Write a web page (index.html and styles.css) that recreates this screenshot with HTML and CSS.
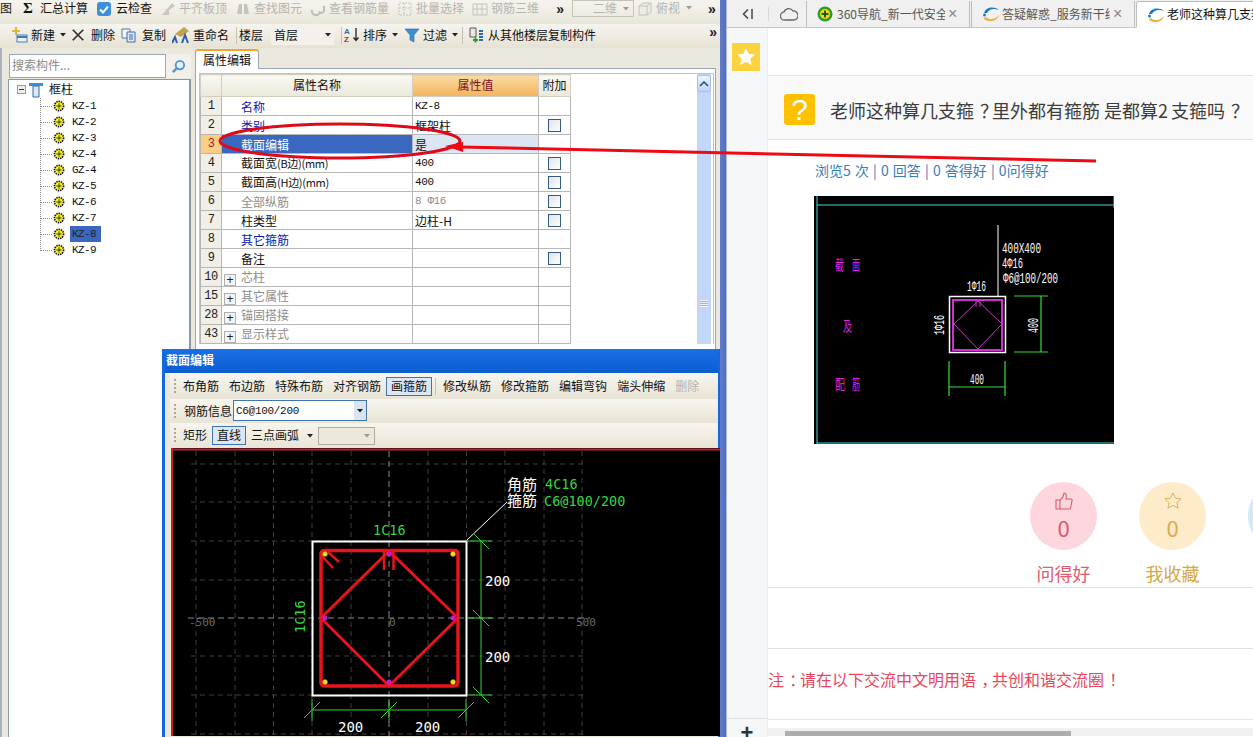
FILE: index.html
```html
<!DOCTYPE html>
<html lang="zh">
<head>
<meta charset="utf-8">
<title>截面编辑</title>
<link rel="stylesheet" href="styles.css">
</head>
<body>
<svg class="defs" width="0" height="0">
  <symbol id="gear" viewBox="0 0 12 12">
    <circle cx="6" cy="6" r="4.600" fill="#f6f01e" stroke="#111" stroke-width="1.600" stroke-dasharray="1.400 .9"/>
    <path d="M3.500 6h5M6 3.500v5" stroke="#222" stroke-width=".9"/>
  </symbol>
  <symbol id="caret" viewBox="0 0 6 4"><path d="M0 0h6L3 3.500z" fill="#222"/></symbol>
  <symbol id="logo" viewBox="0 0 18 16">
    <path d="M2 7C4 1 12 0 17 4C12 2 7 3 5 7z" fill="#2179c6"/>
    <path d="M3 11c5 3 10 3 14-2c-1 6-10 8-15 4z" fill="#efb13a"/>
    <circle cx="2.500" cy="9" r="1.500" fill="#2179c6"/>
  </symbol>
</svg>

<div class="screen">
  <section class="app">
    <div class="bar bar-top">
      <span class="label first">图</span>
      <span class="sigma">Σ</span>
      <span class="label">汇总计算</span>
      <span class="tool t-cloud"><svg class="ic" viewBox="0 0 16 16"><rect x="1" y="1" width="14" height="14" rx="3" fill="#3d8fd8"/><path d="M4 8.500l3 3 5-6" stroke="#fff" stroke-width="2" fill="none"/></svg>云检查</span>
      <span class="tool off"><svg class="ic" viewBox="0 0 16 16"><path d="M2 14L12 2l3 3-6 4v5z" fill="#c8c8c2"/></svg>平齐板顶</span>
      <span class="tool off"><svg class="ic" viewBox="0 0 16 16"><path d="M2 13l2-10h3v10zM9 13V3h3l2 10z" fill="#c4c4be"/></svg>查找图元</span>
      <span class="tool off"><svg class="ic" viewBox="0 0 16 16"><path d="M2 9a4 4 0 0 0 8 2M14 5v5a3 3 0 0 1-5 1" stroke="#bdbdb6" stroke-width="2" fill="none"/></svg>查看钢筋量</span>
      <span class="tool off"><svg class="ic" viewBox="0 0 16 16"><path d="M2 2h12v12H2zM2 7h12M7 2v12" stroke="#c4c4be" fill="none" stroke-dasharray="2 1"/></svg>批量选择</span>
      <span class="tool off"><svg class="ic" viewBox="0 0 16 16"><path d="M1 3h14v11H1zM5 3v11M10 3v11M1 8h14" stroke="#c4c4be" fill="none"/></svg>钢筋三维</span>
      <span class="more more-a">»</span>
      <span class="combo-2d">二维<svg class="caret off-caret"><use href="#caret"/></svg></span>
      <svg class="ic view-ic" viewBox="0 0 16 16"><path d="M2 5l4-3h8v9l-4 3H2zM2 5h8v9M10 5l4-3" stroke="#c0c0ba" fill="#eeece4"/></svg>
      <span class="view-label">俯视<svg class="caret off-caret"><use href="#caret"/></svg></span>
      <span class="more more-b">»</span>
    </div>

    <div class="bar bar-second">
      <span class="tool t-new"><svg class="ic" viewBox="0 0 16 16"><path d="M3 0v3H0v2h3v3h2V5h3V3H5V0z" fill="#e4b53a"/><rect x="5" y="8" width="10" height="7" fill="#e8f1fa" stroke="#3e7fb6"/><path d="M5 10h10" stroke="#3e7fb6" stroke-width="2"/></svg>新建<svg class="caret"><use href="#caret"/></svg></span>
      <span class="tool t-del"><svg class="ic ic-sm" viewBox="0 0 16 16"><path d="M2 2l12 12M14 2L2 14" stroke="#333" stroke-width="2"/></svg>删除</span>
      <span class="tool t-copy"><svg class="ic" viewBox="0 0 16 16"><path d="M1 2h8v9H1z" fill="#f4f6fa" stroke="#5878a0"/><path d="M6 5h8v10H6z" fill="#dfe8f4" stroke="#3e6ea8"/><path d="M8 8h4M8 10h4M8 12h4" stroke="#3e6ea8"/></svg>复制</span>
      <span class="tool t-ren"><svg class="ic ic-lg" viewBox="0 0 18 18"><path d="M3 8l9-7 5 4-8 6z" fill="#c2a24e"/><path d="M0 17l3-6 2 6M10 17l3-8 3 8" stroke="#2b5fa8" stroke-width="2" fill="none"/></svg>重命名</span>
      <span class="sep"></span>
      <span class="label floor">楼层</span>
      <span class="floor-combo">首层<svg class="caret"><use href="#caret"/></svg></span>
      <span class="sep"></span>
      <span class="tool t-sort"><svg class="ic" viewBox="0 0 16 16"><text x="0" y="7" class="az az-a">A</text><text x="0" y="15" class="az az-z">Z</text><path d="M12 1v12M9.500 10.500l2.500 3 2.500-3" stroke="#222" fill="none" stroke-width="1.300"/></svg>排序<svg class="caret"><use href="#caret"/></svg></span>
      <span class="tool t-filter"><svg class="ic" viewBox="0 0 16 16"><path d="M1 2h14l-5 6v7l-4-2V8z" fill="#3f8ed6" stroke="#2c6aa8" stroke-width=".6"/></svg>过滤<svg class="caret"><use href="#caret"/></svg></span>
      <span class="sep sep-c"></span>
      <span class="tool t-floor"><svg class="ic" viewBox="0 0 16 16"><path d="M2 1h6v9H2z" fill="#e8e8e8" stroke="#555"/><path d="M5 13h5M7.500 10.500v5" stroke="#2e9c3a" stroke-width="2"/><path d="M11 4h4M11 7h4M11 10h4M11 13h4" stroke="#2c6aa8" stroke-width="2"/></svg>从其他楼层复制构件</span>
      <span class="more more-c">»</span>
    </div>

    <div class="workspace">
      <aside class="tree-side">
        <div class="search">
          <span class="search-input">搜索构件...</span>
          <span class="search-btn"><svg viewBox="0 0 16 16" width="15" height="15"><circle cx="9.500" cy="6.500" r="4.500" fill="#e8f2fb" stroke="#4c95d6" stroke-width="2"/><path d="M6 10l-4 4" stroke="#4c95d6" stroke-width="2.500"/></svg></span>
        </div>
        <div class="tree">
          <div class="tree-root">
            <span class="minus"></span>
            <svg class="funnel" viewBox="0 0 14 16"><path d="M0 1h14v3H0z" fill="#3d8fd8"/><path d="M4 4h6v11H4z" fill="#dbe9f6" stroke="#2c6aa8"/></svg>
            <span>框柱</span>
          </div>
          <ul class="tree-list">
            <li><svg class="gear"><use href="#gear"/></svg><span>KZ-1</span></li>
            <li><svg class="gear"><use href="#gear"/></svg><span>KZ-2</span></li>
            <li><svg class="gear"><use href="#gear"/></svg><span>KZ-3</span></li>
            <li><svg class="gear"><use href="#gear"/></svg><span>KZ-4</span></li>
            <li><svg class="gear"><use href="#gear"/></svg><span>GZ-4</span></li>
            <li><svg class="gear"><use href="#gear"/></svg><span>KZ-5</span></li>
            <li><svg class="gear"><use href="#gear"/></svg><span>KZ-6</span></li>
            <li><svg class="gear"><use href="#gear"/></svg><span>KZ-7</span></li>
            <li><svg class="gear"><use href="#gear"/></svg><span class="picked">KZ-8</span></li>
            <li><svg class="gear"><use href="#gear"/></svg><span>KZ-9</span></li>
          </ul>
        </div>
      </aside>

      <main class="props">
        <div class="tab">属性编辑</div>
        <div class="props-panel">
          <div class="table-frame">
            <table class="grid">
              <colgroup><col class="c-n"><col class="c-name"><col class="c-val"><col class="c-add"></colgroup>
              <thead><tr><th></th><th>属性名称</th><th class="th-val">属性值</th><th>附加</th></tr></thead>
              <tbody>
                <tr><td class="n">1</td><td class="name link">名称</td><td class="mono">KZ-8</td><td></td></tr>
                <tr><td class="n">2</td><td class="name link">类别</td><td>框架柱</td><td class="chk"><i></i></td></tr>
                <tr class="sel"><td class="n">3</td><td class="name">截面编辑</td><td>是</td><td></td></tr>
                <tr><td class="n">4</td><td class="name">截面宽<span class="unit">(B边)(mm)</span></td><td class="mono">400</td><td class="chk"><i></i></td></tr>
                <tr><td class="n">5</td><td class="name">截面高<span class="unit">(H边)(mm)</span></td><td class="mono">400</td><td class="chk"><i></i></td></tr>
                <tr><td class="n">6</td><td class="name dim">全部纵筋</td><td class="mono dim">8 Φ16</td><td class="chk"><i></i></td></tr>
                <tr><td class="n">7</td><td class="name">柱类型</td><td>边柱-H</td><td class="chk"><i></i></td></tr>
                <tr><td class="n">8</td><td class="name link">其它箍筋</td><td></td><td></td></tr>
                <tr><td class="n">9</td><td class="name">备注</td><td></td><td class="chk"><i></i></td></tr>
                <tr><td class="n">10</td><td class="name dim"><b class="plus">+</b>芯柱</td><td></td><td></td></tr>
                <tr><td class="n">15</td><td class="name dim"><b class="plus">+</b>其它属性</td><td></td><td></td></tr>
                <tr><td class="n">28</td><td class="name dim"><b class="plus">+</b>锚固搭接</td><td></td><td></td></tr>
                <tr><td class="n">43</td><td class="name dim"><b class="plus">+</b>显示样式</td><td></td><td></td></tr>
              </tbody>
            </table>
            <div class="vscroll">
              <span class="vs-up"><svg viewBox="0 0 10 6" width="10" height="6"><path d="M1 5l4-4 4 4" stroke="#27517f" stroke-width="1.600" fill="none"/></svg></span>
              <span class="vs-grip"></span>
            </div>
          </div>
        </div>
      </main>
    </div>
  </section>

  <div class="splitter"></div>

  <section class="browser">
    <div class="tabbar">
      <svg class="nav-back" viewBox="0 0 11 10"><path d="M6 .5L1.500 5 6 9.500M10 0v10" fill="none" stroke="#444" stroke-width="1.500"/></svg>
      <span class="nav-sep"></span>
      <svg class="cloud" viewBox="0 0 18 14"><path d="M5 13a4 4 0 0 1-1-8 5 5 0 0 1 9-1 4.500 4.500 0 0 1 1 9z" fill="none" stroke="#666" stroke-width="1.300"/></svg>
      <div class="btab t1"><svg class="fav" viewBox="0 0 16 16"><circle cx="8" cy="8" r="7.500" fill="#2d9a32"/><circle cx="8" cy="8" r="5" fill="#f5d90a"/><path d="M4.500 8h7M8 4.500v7" stroke="#165e1a" stroke-width="2"/></svg><span class="btab-text">360导航_新一代安全</span><span class="x">×</span></div>
      <div class="btab t2"><svg class="fav2"><use href="#logo"/></svg><span class="btab-text">答疑解惑_服务新干线</span><span class="x">×</span></div>
      <div class="btab active"><svg class="fav2"><use href="#logo"/></svg><span class="btab-text">老师这种算几支箍？里外</span></div>
    </div>
    <div class="browser-body">
      <nav class="rail">
        <span class="star-box"><svg viewBox="0 0 20 20" width="20" height="20"><path d="M10 1l2.800 6 6.200.6-4.700 4.200 1.400 6.200L10 14.800 4.300 18l1.400-6.200L1 7.600 7.200 7z" fill="#fff"/></svg></span>
        <span class="rail-add">+</span>
      </nav>
      <article class="page">
        <div class="page-top"></div>
        <header class="question">
          <span class="q-mark">?</span>
          <h1>老师这种算几支箍<span class="punct">？</span>里外都有箍筋 是都算<span class="num">2</span>支箍吗<span class="punct">？</span></h1>
        </header>
        <p class="stats">浏览5 次 | 0 回答 | 0 答得好 | 0问得好</p>
        <svg class="photo" viewBox="814 197 300 248" width="300" height="248">
          <rect x="814" y="197" width="300" height="248" fill="#000"/>
          <path d="M817 197v248M817 206h297M817 444h297M1114 197v12" stroke="#49d6d6" fill="none"/>
          <path d="M998 226v71" stroke="#fff"/>
          <rect x="949.500" y="297.500" width="56" height="56" fill="none" stroke="#fff" stroke-width="1.500"/>
          <rect x="953" y="301" width="49" height="50" fill="none" stroke="#d22fd2" stroke-width="2"/>
          <path d="M978 302l24 23-24 25-24-25z" fill="none" stroke="#d22fd2"/>
          <path d="M976 302v6M980 302v6" stroke="#d22fd2"/>
          <path d="M1014 297h34M1014 353h34M1041 297v56M949 362v35M1005 362v35M949 388h56" stroke="#35e035" stroke-width="1.200"/>
          <g class="cad-w">
            <text x="1002" y="254" textLength="39" lengthAdjust="spacingAndGlyphs">400X400</text>
            <text x="1002" y="269" textLength="21" lengthAdjust="spacingAndGlyphs">4Φ16</text>
            <text x="1003" y="284" textLength="55" lengthAdjust="spacingAndGlyphs">Φ6@100/200</text>
            <text x="967" y="292" textLength="19" lengthAdjust="spacingAndGlyphs">1Φ16</text>
            <text x="970" y="385" textLength="14" lengthAdjust="spacingAndGlyphs">400</text>
            <text transform="translate(944 336) rotate(-90)" textLength="20" lengthAdjust="spacingAndGlyphs">1Φ16</text>
            <text transform="translate(1038 334) rotate(-90)" textLength="15" lengthAdjust="spacingAndGlyphs">400</text>
          </g>
          <g class="cad-m">
            <text x="835" y="271" textLength="9" lengthAdjust="spacingAndGlyphs">截</text><text x="852" y="271" textLength="8" lengthAdjust="spacingAndGlyphs">面</text>
            <text x="843" y="332" textLength="9" lengthAdjust="spacingAndGlyphs">及</text>
            <text x="835" y="390" textLength="10" lengthAdjust="spacingAndGlyphs">配</text><text x="852" y="390" textLength="8" lengthAdjust="spacingAndGlyphs">筋</text>
          </g>
        </svg>
        <div class="actions">
          <div class="action good">
            <span class="disc"><svg viewBox="0 0 18 18" width="18" height="18"><path d="M1 8h4v9H1zM5 8l3-3 1-4c2 0 3 2 2 6h5c1 0 1.500 1 1 2l-1.500 7c0 .6-.6 1-1.300 1H5" fill="none" stroke="currentColor" stroke-width="1.100"/></svg><b>0</b></span>
            <span class="action-label">问得好</span>
          </div>
          <div class="action fav-act">
            <span class="disc"><svg viewBox="0 0 20 20" width="18" height="18"><path d="M10 1l2.800 6 6.200.6-4.700 4.200 1.400 6.200L10 14.800 4.300 18l1.400-6.200L1 7.600 7.200 7z" fill="none" stroke="currentColor"/></svg><b>0</b></span>
            <span class="action-label">我收藏</span>
          </div>
          <div class="action sky"><span class="disc"></span></div>
        </div>
        <div class="gap-band"></div>
        <p class="note">注<span class="punct">：</span>请在以下交流中文明用语<span class="punct">，</span>共创和谐交流圈<span class="punct">！</span></p>
        <div class="hscroll"><span class="hs-thumb"></span></div>
      </article>
    </div>
  </section>

  <div class="dialog">
    <div class="dlg-title">截面编辑</div>
    <div class="dlg-inner">
      <div class="dlg-row r1">
        <span class="grip"></span>
        <span>布角筋</span><span>布边筋</span><span>特殊布筋</span><span>对齐钢筋</span>
        <span class="pressed">画箍筋</span><span class="sep"></span>
        <span>修改纵筋</span><span>修改箍筋</span><span>编辑弯钩</span><span>端头伸缩</span><span class="off">删除</span>
      </div>
      <div class="dlg-row r2">
        <span class="grip"></span>
        <span>钢筋信息</span>
        <span class="rebar-combo"><span>C6@100/200</span><span class="rc-btn"><svg class="caret"><use href="#caret"/></svg></span></span>
      </div>
      <div class="dlg-row r3">
        <span class="grip"></span>
        <span>矩形</span><span class="pressed">直线</span><span>三点画弧</span>
        <svg class="caret arc-caret"><use href="#caret"/></svg>
        <span class="arc-combo"><svg class="caret off-caret"><use href="#caret"/></svg></span>
      </div>
      <svg class="cad" viewBox="171 449 549 288" width="549" height="288">
        <rect x="171" y="449" width="549" height="288" fill="#000"/>
        <path d="M171 450.500H720M172 449v288" stroke="#c0202c" stroke-width="2"/>
        <path class="grid-minor" d="M191 465H587M191 503H587M191 542H587M191 581H587M191 657H587M191 696H587M191 735H587M196 452V737M235 452V737M273.500 452V737M312 452V737M351 452V737M428 452V737M466.500 452V737M505 452V737M544 452V737M582 452V737"/>
        <path class="grid-major" d="M188 619H590M389 452V737"/>
        <text class="cad-grey" x="189" y="627">-500</text>
        <text class="cad-grey" x="389" y="627">0</text>
        <text class="cad-grey" x="576" y="627">500</text>
        <path d="M467 541L507 503" stroke="#fff"/>
        <rect x="312.500" y="542.500" width="154" height="154" fill="none" stroke="#fff" stroke-width="2"/>
        <rect x="321" y="551.500" width="137" height="135.500" rx="3" fill="none" stroke="#e8141c" stroke-width="3.500"/>
        <path d="M389 552L458 619L389 687L321 619Z" fill="none" stroke="#e8141c" stroke-width="3"/>
        <path d="M322 557l11 12M328 553l11 10M384 553v18M393.500 553v18" stroke="#e8141c" stroke-width="2.500" fill="none"/>
        <g class="dot-y"><circle cx="325" cy="555" r="2.500"/><circle cx="453" cy="555" r="2.500"/><circle cx="325" cy="683" r="2.500"/><circle cx="453" cy="683" r="2.500"/></g>
        <g class="dot-p"><circle cx="389" cy="555" r="2.500"/><circle cx="325" cy="619" r="2.500"/><circle cx="453" cy="619" r="2.500"/><circle cx="389" cy="683" r="2.500"/></g>
        <path class="dim-line" d="M481 542V696M467 542H492M467 619H492M467 696H492M473 534l16 16M473 611l16 16M473 688l16 16M312 711H466M312 700V722M389 700V722M466 700V722M304 719l16-16M381 719l16-16M458 719l16-16"/>
        <g class="cad-white">
          <text x="485" y="587">200</text><text x="485" y="663">200</text>
          <text x="338" y="733">200</text><text x="415" y="733">200</text>
        </g>
        <g class="cad-green">
          <text x="373" y="536">1C16</text>
          <text transform="translate(305 634) rotate(-90)">1C16</text>
          <text x="545" y="490">4C16</text>
          <text x="544" y="507">C6@100/200</text>
        </g>
        <g class="cad-cn">
          <text x="507" y="491">角筋</text>
          <text x="507" y="507">箍筋</text>
        </g>
      </svg>
    </div>
  </div>

  <svg class="annotation" viewBox="0 0 1253 737" width="1253" height="737">
    <ellipse cx="340" cy="141" rx="120" ry="17" fill="none" stroke="#dd0a1c" stroke-width="3"/>
    <path d="M460 147L1096 161" stroke="#ee0a14" stroke-width="3"/>
    <path d="M445 146L463 142L463 152Z" fill="#ee0a14"/>
  </svg>
</div>
</body>
</html>
```

FILE: styles.css
```css
* { box-sizing: border-box; }
html, body { margin: 0; padding: 0; height: 100%; overflow: hidden; background: #fff; }
body { font: 12px/1.2 "Noto Sans CJK SC", "Liberation Sans", sans-serif; color: #111; }
.defs { position: absolute; }

.screen { position: relative; display: flex; width: 1253px; height: 737px; overflow: hidden; }

/* ---------- CAD application ---------- */
.app { width: 720px; flex: none; display: flex; flex-direction: column; background: #ebe8dd; }
.bar { display: flex; align-items: center; flex: none; white-space: nowrap; }
.bar > * { flex: none; }
.bar-top { height: 24px; padding-bottom: 7px; background: linear-gradient(#f6f4ee, #e9e6da); }
.bar-second { height: 24px; padding: 0 0 2px 12px; background: linear-gradient(#f6f4ee, #e6e2d4); }
.tool { display: inline-flex; align-items: center; gap: 3px; margin-left: 8px; }
.tool.off { color: #b5b5ae; }
.t-cloud { gap: 4px; }
.ic { width: 16px; height: 16px; flex: none; }
.ic-lg { width: 18px; height: 18px; }
.ic-sm { width: 14px; height: 14px; }
.first { margin-right: 11px; }
.sigma { width: 10px; font: bold 15px "Liberation Serif", serif; margin-right: 7px; }
.more { font: bold 14px/1 "Liberation Sans", sans-serif; color: #222; }
.more-a { margin-left: 17px; }
.more-b { margin-left: 16px; }
.more-c { margin-left: 113px; margin-top: -6px; }
.combo-2d { display: flex; align-items: center; justify-content: space-between; margin-left: 8px; width: 62px; height: 17px; padding: 0 4px 0 20px; border: 1px solid #c6c3b8; color: #b5b5ae; }
.view-ic { margin-left: 3px; }
.view-label { display: flex; align-items: center; gap: 6px; color: #b5b5ae; margin-left: 3px; }
.caret { width: 6px; height: 4px; flex: none; }
.off-caret { opacity: .4; }
.tool .caret { margin-left: 2px; }
.t-new { margin-left: 0; }
.t-del { margin-left: 5px; gap: 6px; }
.t-copy { margin-left: 6px; gap: 5px; }
.t-ren { margin-left: 6px; gap: 3px; }
.sep { width: 1px; height: 17px; background: #c4c0b2; flex: none; }
.bar-second > .sep { margin-left: 7px; }
.floor { margin-left: 2px; }
.floor-combo { display: flex; align-items: center; justify-content: space-between; width: 63px; margin-left: 8px; padding: 0 3px; height: 20px; background: #f3f1ea; }
.t-sort { margin-left: 2px; }
.t-filter { margin-left: 6px; gap: 3px; }
.bar-second > .sep-c { margin-left: 4px; }
.t-floor { margin-left: 5px; gap: 4px; }
.az { font: bold 8px "Liberation Sans", sans-serif; }
.az-a { fill: #2b6cb0; }
.az-z { fill: #b03030; }

.workspace { flex: 1; min-height: 0; display: flex; padding-left: 6px; border-left: 2px solid #aab2c0; }
.tree-side { width: 183px; flex: none; display: flex; flex-direction: column; padding-top: 6px; }
.search { display: flex; height: 24px; flex: none; padding-left: 1px; }
.search-input { width: 157px; border: 1px solid #9aa6b4; background: #fff; color: #8a8a8a; padding: 3px 2px; font-size: 12px; }
.search-btn { flex: 1; display: flex; align-items: center; justify-content: center; background: #f2f0e8; }
.tree { flex: 1; margin-top: 1px; background: #fff; border: 1px solid #8c98a8; border-width: 1px 2px 0 1px; padding-top: 1px; }
.tree-root { display: flex; align-items: center; height: 17px; padding-left: 8px; }
.minus { position: relative; width: 9px; height: 9px; border: 1px solid #9a9a9a; background: #eee; margin-right: 3px; }
.minus::after { content: ""; position: absolute; left: 1px; right: 1px; top: 3px; height: 1px; background: #333; }
.funnel { width: 14px; height: 16px; margin-right: 6px; }
.tree-list { list-style: none; margin: 0 0 0 31px; padding: 0; border-left: 1px dotted #888; height: 153px; }
.tree-list li { display: flex; align-items: center; height: 16px; position: relative; padding-left: 12px; font: 11px/16px "Liberation Mono", monospace; letter-spacing: -.6px; }
.tree-list li::before { content: ""; position: absolute; left: 0; top: 8px; width: 11px; border-top: 1px dotted #888; }
.gear { width: 12px; height: 12px; margin-right: 5px; }
.tree-list span { padding: 0 2px; line-height: 16px; }
.tree-list .picked { background: #3a68c0; color: #222; width: 31px; }

.props { flex: 1; display: flex; flex-direction: column; padding-left: 4px; min-width: 0; }
.tab { align-self: flex-start; width: 64px; height: 20px; margin-top: 1px; padding: 2px 0 0 7px; background: #fff; border: 1px solid #9aa6b4; border-top: 2px solid #eda62f; border-bottom: 0; border-radius: 3px 3px 0 0; position: relative; z-index: 1; margin-bottom: -1px; }
.props-panel { flex: 1; margin-right: 4px; background: #fff; border: 1px solid #9aa6b4; padding: 4px 1px 0 3px; }
.table-frame { display: flex; justify-content: space-between; height: 271px; border: 1px solid #b9c4d0; border-bottom: 0; }
.grid { border-collapse: collapse; table-layout: fixed; width: 370px; height: 270px; font-size: 12px; }
.c-n { width: 21px; } .c-name { width: 191px; } .c-val { width: 126px; } .c-add { width: 32px; }
.grid th { height: 22px; padding: 0; font-weight: 400; background: linear-gradient(#f9f8f2, #ebe8da); border: 1px solid #d2cfc2; }
.grid th.th-val { background: linear-gradient(#fbdca4, #f2b45a); color: #7c1020; }
.grid td { height: 19px; padding: 0 0 0 2px; border: 1px solid #b7b7b7; white-space: nowrap; overflow: hidden; line-height: 15px; }
.grid td.n { padding: 0; text-align: center; background: #f1efe6; color: #222; font: 12px/15px "Liberation Mono", monospace; letter-spacing: -.5px; }
.grid td.name { padding-left: 19px; }
.grid td.name:has(.plus) { padding-left: 2px; }
.unit { font-size: 11px; letter-spacing: -.3px; }
.link { color: #0c1ab0; }
.dim { color: #8d8d8d; }
.mono { font-family: "Liberation Mono", monospace; font-size: 11px; letter-spacing: -.4px; }
.plus { display: inline-block; width: 12px; height: 12px; margin-right: 5px; border: 1px solid #b0b0b0; background: #f4f4f4; color: #222; font: 400 12px/10px "Liberation Sans", sans-serif; text-align: center; vertical-align: -2px; }
.sel .n { background: #fbcd85 !important; color: #b02020 !important; }
.sel .name { background: #3a68c0; color: #fff; }
.sel td:nth-child(3) { background: #dce6f3; }
.chk i { display: block; width: 13px; height: 13px; margin: 0 auto; border: 1px solid #365a80; background: linear-gradient(135deg, #dfe3e8, #fff); }
.chk { padding: 0 !important; }
.vscroll { position: relative; width: 14px; margin-right: 2px; background: #c2d6f7; display: flex; flex-direction: column; align-items: center; }
.vs-up { width: 14px; height: 17px; margin-top: 1px; display: flex; align-items: center; justify-content: center; background: linear-gradient(#eef4fd, #bcd2f5); border: 1px solid #a9c0e6; border-radius: 2px; }
.vs-grip { position: absolute; top: 226px; left: 3px; width: 8px; height: 7px; background: repeating-linear-gradient(#eef4fd 0 1px, #9db8e0 1px 2px); }

.splitter { width: 7px; flex: none; background: linear-gradient(90deg, #5f7cc9, #5470c4 80%, #e8e8e8); }

/* ---------- Browser ---------- */
.browser { flex: 1; min-width: 0; display: flex; flex-direction: column; background: #fff; }
.tabbar { height: 28px; flex: none; display: flex; align-items: flex-end; background: #f0f0f0; border-bottom: 1px solid #c6c6c6; }
.nav-back { width: 11px; height: 10px; margin: 0 0 8px 15px; flex: none; }
.nav-sep { width: 1px; height: 14px; margin: 0 0 6px 15px; background: #d8d8d8; flex: none; }
.cloud { width: 18px; height: 14px; margin: 0 0 6px 11px; flex: none; }
.btab { display: flex; align-items: center; height: 27px; margin-bottom: -1px; flex: none; color: #555; border: 1px solid #bdbdbd; border-bottom-color: #c6c6c6; border-top: 0; overflow: hidden; white-space: nowrap; }
.t1 { width: 164px; margin-left: 8px; padding-left: 10px; }
.t2 { width: 164px; margin-left: 1px; padding-left: 10px; }
.active { flex: 1; min-width: 0; margin-left: 1px; background: #fff; color: #111; padding-left: 10px; border-bottom-color: #fff; border-right: 0; border-top: 1px solid #bbb; border-radius: 3px 0 0 0; }
.fav { width: 16px; height: 16px; margin-right: 4px; flex: none; }
.fav2 { width: 18px; height: 16px; margin-right: 2px; flex: none; }
.btab-text { width: 108px; overflow: hidden; flex: none; }
.active .btab-text { width: auto; overflow: visible; }
.x { font: 16px/1 "Liberation Sans", sans-serif; color: #888; margin-left: 3px; }

.browser-body { flex: 1; min-height: 0; display: flex; }
.rail { position: relative; width: 41px; flex: none; background: #f6f7f8; border-right: 1px solid #ececec; padding: 15px 0 0 5px; }
.star-box { display: flex; align-items: center; justify-content: center; width: 28px; height: 28px; background: #fcd23e; }
.rail-add { position: absolute; left: 0; right: 0; bottom: 0; height: 19px; border-top: 1px solid #e2e2e2; text-align: center; font: bold 22px/28px "Liberation Sans", sans-serif; color: #333; overflow: hidden; }

.page { flex: 1; min-width: 0; display: flex; flex-direction: column; position: relative; overflow: hidden; }
.page-top { height: 49px; flex: none; border-bottom: 1px solid #e4e4e4; margin-top: -1px; }
.question { display: flex; align-items: center; height: 64px; padding: 4px 0 0 16px; background: #f9f9f9; border-bottom: 1px solid #e6e6e6; flex: none; }
.q-mark { display: flex; align-items: center; justify-content: center; width: 31px; height: 31px; border-radius: 3px; background: #fdc100; color: #fff; font: 30px/31px "Liberation Sans", sans-serif; flex: none; }
.question h1 { margin: 0 0 0 15px; font-size: 18px; font-weight: 400; line-height: 26px; color: #3c3c3c; white-space: nowrap; }
.punct { padding-left: .33em; margin-right: -.33em; }
.num { margin-right: 3px; }
.stats { margin: 20px 0 0 47px; font-size: 14px; line-height: 20px; color: #3a7db8; word-spacing: 1px; flex: none; }
.photo { display: block; margin: 16px 0 0 46px; flex: none; }
.cad-w { font: 14px "Liberation Mono", monospace; fill: #fff; }
.cad-m { font: 14px "Noto Sans CJK SC", sans-serif; fill: #e020e0; }

.actions { display: flex; height: 105px; margin-top: 38px; padding-left: 262px; gap: 42px; flex: none; }
.action { display: flex; flex-direction: column; align-items: center; width: 67px; }
.disc { display: flex; flex-direction: column; align-items: center; justify-content: center; width: 67px; height: 68px; border-radius: 50%; }
.disc b { margin-top: 4px; font: 400 22px/26px "Noto Sans CJK SC", sans-serif; }
.action-label { margin-top: 10px; font-size: 18px; line-height: 26px; white-space: nowrap; }
.good .disc { background: #fdd7dd; color: #dc5a6c; }
.good .action-label { color: #e25c70; }
.fav-act .disc { background: #feebc9; color: #dcaa52; }
.fav-act .action-label { color: #d8a93f; }
.sky .disc { background: #cfeaf9; }
.gap-band { height: 62px; flex: none; border-top: 1px solid #e2e2e2; border-bottom: 1px solid #e2e2e2; }
.note { margin: 0; height: 71px; flex: none; padding-top: 18px; font-size: 16px; line-height: 24px; color: #e8465c; border-bottom: 1px solid #e4e4e4; white-space: nowrap; }
.hscroll { height: 8px; margin-top: 8px; background: #f1f1f1; padding: 3px 0 0 17px; flex: none; }
.hs-thumb { display: block; width: 286px; height: 5px; background: #adadad; }

/* ---------- Floating dialog ---------- */
.dialog { position: absolute; left: 162px; top: 349px; width: 558px; height: 388px; display: flex; flex-direction: column; background: #1268dc; padding: 0 2px 0 3px; }
.dlg-title { height: 24px; flex: none; padding: 4px 0 0 1px; color: #fff; font-weight: 700; background: linear-gradient(#1a6fe4, #0c5dd0); }
.dlg-inner { flex: 1; min-height: 0; background: #ece9da; padding-left: 5px; display: flex; flex-direction: column; border-top: 1px solid #fff; }
.dlg-row { display: flex; align-items: center; flex: none; white-space: nowrap; background: linear-gradient(#f7f5ee, #e8e4d6); padding-left: 4px; }
.r1 { height: 25px; gap: 10px; }
.r2 { height: 24px; gap: 1px; }
.r3 { height: 25px; gap: 5px; }
.grip { width: 2px; height: 15px; background: repeating-linear-gradient(#a9a69a 0 2px, transparent 2px 4px); flex: none; }
.r1 .grip { margin-right: -3px; }
.r2 .grip { margin-right: 7px; }
.r3 .grip { margin-right: 2px; }
.pressed { padding: 1px 4px; background: #dde7f3; border: 1px solid #3f74ad; }
.r1 .pressed { margin-left: -5px; }
.r1 .sep { margin: 0 -3px 0 -7px; }
.dlg-row .off { color: #b5b5ae; }
.rebar-combo { display: flex; align-items: center; justify-content: space-between; width: 134px; height: 21px; margin-top: -1px; background: #fff; border: 1px solid #3f74ad; padding-left: 2px; font: 11px "Liberation Mono", monospace; letter-spacing: -.3px; }
.rc-btn { display: flex; align-items: center; justify-content: center; width: 12px; height: 19px; background: #d8e4f2; }
.arc-caret { margin-left: 3px; }
.arc-combo { display: flex; align-items: center; justify-content: flex-end; width: 57px; height: 18px; padding-right: 4px; border: 1px solid #b0ad9e; background: #ece9da; }
.cad { display: block; flex: none; margin-left: 1px; }
.grid-minor { stroke: #3f3f3f; stroke-dasharray: 5 4; fill: none; }
.grid-major { stroke: #8a8a8a; stroke-dasharray: 6 4; fill: none; }
.cad-grey { font: 11px "DejaVu Sans Mono", monospace; fill: #6a6a6a; }
.dot-y circle { fill: #f2e21c; stroke: #a08000; stroke-width: .5; }
.dot-p circle { fill: #c418d8; }
.dim-line { stroke: #32d232; fill: none; }
.cad-white { font: 14px "DejaVu Sans Mono", monospace; fill: #fff; }
.cad-green { font: 13.500px "DejaVu Sans Mono", monospace; fill: #35d43f; }
.cad-cn { font: 15px "Noto Sans CJK SC", sans-serif; fill: #fff; }

.annotation { position: absolute; left: 0; top: 0; pointer-events: none; }
```
